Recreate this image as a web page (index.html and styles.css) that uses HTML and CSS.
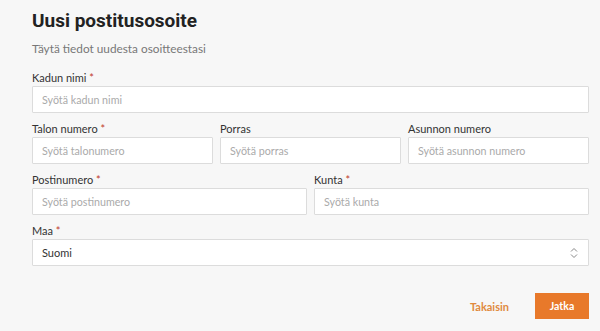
FILE: index.html
```html
<!DOCTYPE html>
<html lang="fi">
<head>
  <meta charset="UTF-8">
  <title>Uusi postitusosoite</title>
  <link rel="stylesheet" href="styles.css">
</head>
<body>
  <div class="container">
    <h1>Uusi postitusosoite</h1>
    <p class="intro">Täytä tiedot uudesta osoitteestasi</p>

    <form class="address-form">
      <div class="field">
        <label>Kadun nimi <span class="req">*</span></label>
        <input type="text" placeholder="Syötä kadun nimi">
      </div>

      <div class="row row-3">
        <div class="field">
          <label>Talon numero <span class="req">*</span></label>
          <input type="text" placeholder="Syötä talonumero">
        </div>
        <div class="field">
          <label>Porras</label>
          <input type="text" placeholder="Syötä porras">
        </div>
        <div class="field">
          <label>Asunnon numero</label>
          <input type="text" placeholder="Syötä asunnon numero">
        </div>
      </div>

      <div class="row row-2">
        <div class="field">
          <label>Postinumero <span class="req">*</span></label>
          <input type="text" placeholder="Syötä postinumero">
        </div>
        <div class="field">
          <label>Kunta <span class="req">*</span></label>
          <input type="text" placeholder="Syötä kunta">
        </div>
      </div>

      <div class="field">
        <label>Maa <span class="req">*</span></label>
        <div class="select">
          <span>Suomi</span>
          <svg width="8" height="12" viewBox="0 0 8 12">
            <path d="M1 4.5 L4 1.5 L7 4.5 M1 7.5 L4 10.5 L7 7.5" fill="none" stroke="#888" stroke-width="1"/>
          </svg>
        </div>
      </div>

      <div class="actions">
        <button type="button" class="link-btn">Takaisin</button>
        <button type="button" class="primary-btn">Jatka</button>
      </div>
    </form>
  </div>
</body>
</html>
```

FILE: styles.css
```css
* {
  margin: 0;
  padding: 0;
  box-sizing: border-box;
  font-family: 'Lato', sans-serif;
}

body {
  background: #f7f7f7;
  color: #333;
}

.container {
  padding: 8px 11px 0 32px;
}

h1 {
  font-family: 'Roboto', sans-serif;
  font-size: 19px;
  line-height: 26px;
  font-weight: 700;
  color: #222;
}

.intro {
  margin-top: 7px;
  font-size: 11.8px;
  line-height: 16px;
  color: #777;
}

.address-form {
  margin-top: 13px;
  display: flex;
  flex-direction: column;
  gap: 8px;
}

.row {
  display: grid;
  gap: 7px;
}

.row-3 {
  grid-template-columns: 1fr 1fr 1fr;
}

.row-2 {
  grid-template-columns: 1fr 1fr;
}

.field label {
  display: block;
  font-size: 11px;
  line-height: 16px;
  color: #333;
}

.req {
  color: #c0392b;
}

.field input,
.select {
  display: block;
  width: 100%;
  height: 27px;
  background: #fff;
  border: 1px solid #dcdcdc;
  border-radius: 1px;
  padding: 0 9px;
  font-family: 'Lato', sans-serif;
  font-size: 10.7px;
  color: #333;
  outline: none;
}

.field input::placeholder {
  color: #aaa;
}

.select {
  display: flex;
  align-items: center;
  justify-content: space-between;
  font-size: 11px;
  padding-right: 10px;
}

.actions {
  margin-top: 19px;
  display: flex;
  justify-content: flex-end;
  align-items: center;
  gap: 26px;
}

.link-btn {
  background: none;
  border: none;
  font-family: 'Lato', sans-serif;
  color: #e08a3e;
  font-size: 11px;
  font-weight: 700;
  cursor: pointer;
}

.primary-btn {
  width: 54px;
  height: 26px;
  background: #e8792a;
  border: none;
  font-family: 'Lato', sans-serif;
  color: #fff;
  font-size: 10.5px;
  font-weight: 700;
  cursor: pointer;
}
```
